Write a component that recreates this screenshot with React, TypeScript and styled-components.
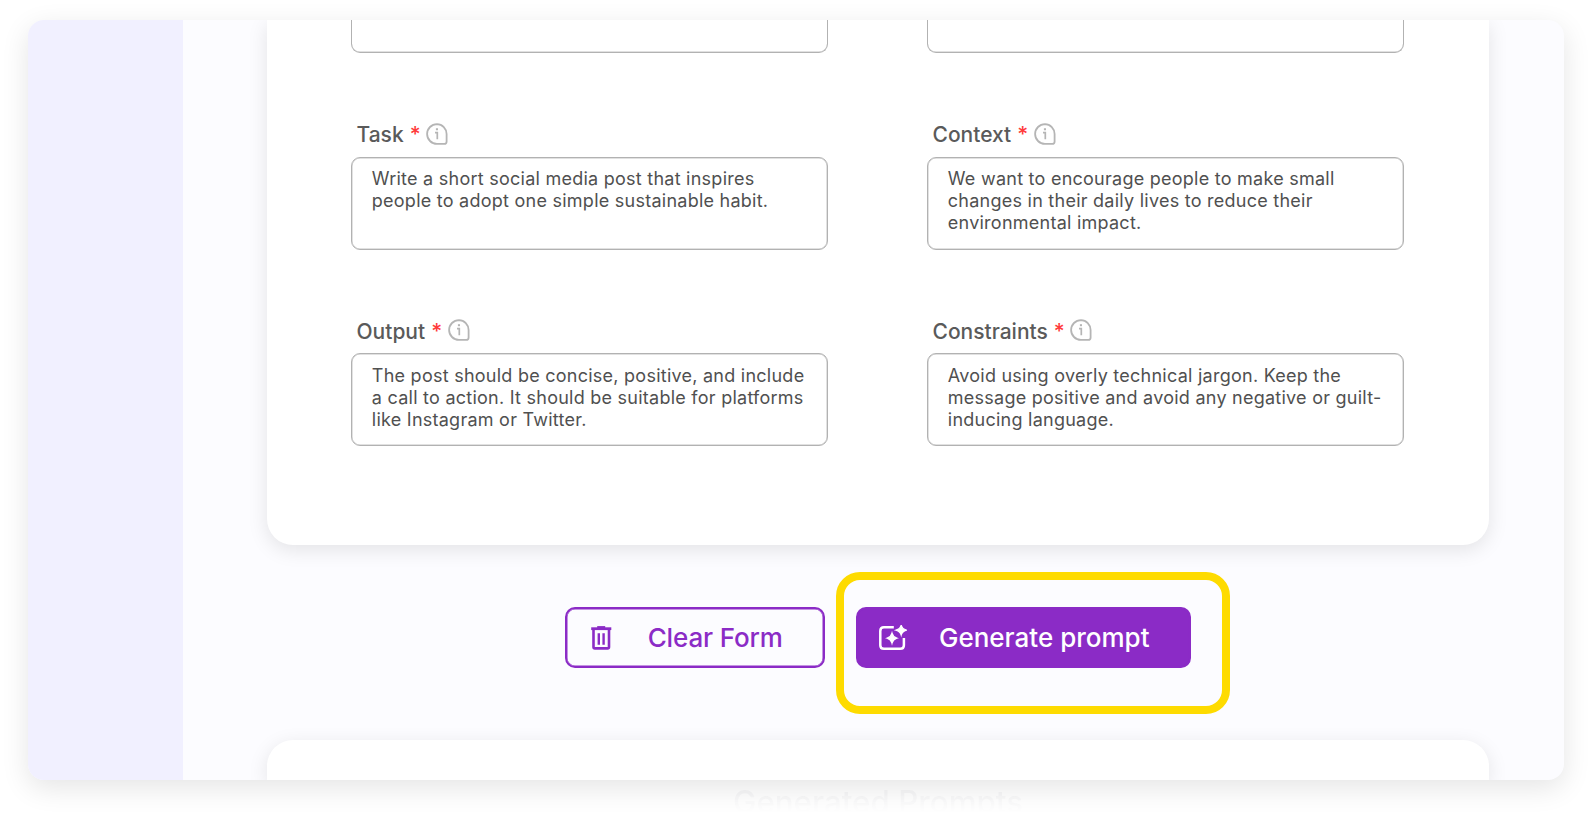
import React from 'react';
import styled, { createGlobalStyle } from 'styled-components';

const GlobalStyle = createGlobalStyle`
  *, *::before, *::after { box-sizing: border-box; }
  body {
    margin: 0;
    background: #fff;
    font-family: Inter, "Liberation Sans", sans-serif;
    overflow: hidden;
  }
`;

const Page = styled.div`
  position: relative;
  width: 1592px;
  height: 816px;
  padding: 20px 28px 36px;
  overflow: hidden;
`;

const Window = styled.div`
  display: flex;
  width: 1536px;
  height: 760px;
  border-radius: 16px;
  overflow: hidden;
  background: #fcfcff;
  box-shadow: 0 8px 28px rgba(0, 0, 0, 0.105);
`;

const Sidebar = styled.aside`
  flex: 0 0 155px;
  background: #f1f0ff;
`;

const Main = styled.main`
  flex: 1;
  display: flex;
  flex-direction: column;
  padding: 0 75px 0 84px;
`;

const Card = styled.section`
  flex: none;
  background: #fff;
  box-shadow: 0 5px 20px rgba(0, 0, 0, 0.1);
`;

const FormCard = styled(Card)`
  height: 525px;
  padding: 0 84px;
  border-radius: 0 0 26px 26px;
`;

const ResultCard = styled(Card)`
  height: 40px;
  border-radius: 26px 26px 0 0;
`;

const Grid = styled.div`
  display: grid;
  grid-template-columns: 476.6px 476.6px;
  column-gap: 99.4px;
`;

const TextBox = styled.div`
  height: 93px;
  padding: 10.5px 19.8px;
  border: 1px solid #b2b2b2;
  box-shadow: inset 0 0 0 0.5px #c4c4c4;
  border-radius: 9px;
  color: #505050;
  font-size: 18px;
  line-height: 22px;
  letter-spacing: 0.25px;
  white-space: pre;
`;

const ClippedBox = styled(TextBox)`
  height: 33px;
  border-top: 0;
  border-radius: 0 0 9px 9px;
  box-shadow: inset 0 -0.5px 0 0 #c4c4c4;
`;

const Field = styled.div`
  padding-top: 66px;
`;

const Label = styled.div`
  display: flex;
  align-items: center;
  height: 30px;
  margin: 0 0 7.7px 5.5px;
  padding-top: 1px;
  color: #5a5a5a;
  font-size: 21px;
  font-weight: 500;

  svg {
    margin-bottom: 2px;
  }
`;

const Required = styled.span`
  margin: 0 5.5px 0 6px;
  color: #ff3b3b;
`;

const Actions = styled.div`
  display: flex;
  flex: none;
  height: 195px;
  padding: 62px 0 0 298px;
  gap: 31px;
`;

const Button = styled.button<{ $primary?: boolean }>`
  display: flex;
  align-items: center;
  width: ${(p) => (p.$primary ? 335 : 260)}px;
  height: 61px;
  padding: 0 0 0 ${(p) => (p.$primary ? 21 : 23.5)}px;
  gap: ${(p) => (p.$primary ? 32 : 36.2)}px;
  border: 2px solid #8b2bc6;
  box-shadow: inset 0 0 0 0.5px #8b2bc6;
  border-radius: 10px;
  background: ${(p) => (p.$primary ? '#8b2bc6' : 'transparent')};
  color: ${(p) => (p.$primary ? '#fff' : '#8b2bc6')};
  font: 500 26px Inter, sans-serif;
  letter-spacing: ${(p) => (p.$primary ? 0 : -0.15)}px;
  white-space: nowrap;
`;

const Highlight = styled.div`
  position: absolute;
  left: 836px;
  top: 572px;
  width: 394px;
  height: 142px;
  border: 8px solid #fedb00;
  border-radius: 24px;
`;

const FadedTitle = styled.div`
  position: absolute;
  left: 733px;
  top: 788px;
  font-size: 31.3px;
  font-weight: 500;
  line-height: 28px;
  color: rgba(60, 60, 80, 0.04);
  white-space: nowrap;
  mask-image: linear-gradient(#000 20%, transparent 86%);
`;

const InfoIcon = () => (
  <svg width="22" height="22" viewBox="0 0 22 22" fill="none" stroke="#b5b5b5" strokeWidth="1.8">
    <path d="M11 1.1A9.8 9.8 0 0 0 11 20.9H18.2Q20.6 20.9 20.6 18.4V11A9.7 9.9 0 0 0 11 1.1Z" />
    <path d="M9 9.7H11.3V16.3" strokeWidth="1.7" />
    <path d="M9.9 6.2H12" strokeWidth="2" />
  </svg>
);

const TrashIcon = () => (
  <svg width="21" height="24" viewBox="0 0 21 24" fill="none" stroke="currentColor">
    <path d="M0.2 2.7H20.3" strokeWidth="2.8" />
    <path d="M6.2 1.2H14.2" strokeWidth="2.2" />
    <path d="M2.5 3V21Q2.5 22.4 3.9 22.4H16.6Q18 22.4 18 21V3" strokeWidth="2.6" />
    <path d="M7.8 7.2V18.8M12.6 7.2V18.8" strokeWidth="2.4" />
  </svg>
);

const SparkleIcon = () => (
  <svg width="28" height="26" viewBox="0 0 28 26" fill="none">
    <path
      d="M14.8 2.3H4.9Q1.3 2.3 1.3 5.9V20.2Q1.3 23.8 4.9 23.8H21.3Q24.9 23.8 24.9 20.2V13"
      stroke="currentColor"
      strokeWidth="2.5"
    />
    <path
      d="M22.2 0.2Q23.2 4 27.4 5.2Q23.2 6.4 22.2 10.2Q21.2 6.4 17 5.2Q21.2 4 22.2 0.2Z"
      fill="currentColor"
      stroke="currentColor"
      strokeWidth="1.2"
    />
    <path
      d="M13 8.2Q14 12 17.8 13.2Q14 14.4 13 18.2Q12 14.4 8.2 13.2Q12 12 13 8.2Z"
      fill="currentColor"
      stroke="currentColor"
      strokeWidth="1.3"
    />
  </svg>
);

const fields = [
  {
    label: 'Task',
    text: 'Write a short social media post that inspires\npeople to adopt one simple sustainable habit.',
  },
  {
    label: 'Context',
    text: 'We want to encourage people to make small\nchanges in their daily lives to reduce their\nenvironmental impact.',
  },
  {
    label: 'Output',
    text: 'The post should be concise, positive, and include\na call to action. It should be suitable for platforms\nlike Instagram or Twitter.',
  },
  {
    label: 'Constraints',
    text: 'Avoid using overly technical jargon. Keep the\nmessage positive and avoid any negative or guilt-\ninducing language.',
  },
];

export default function App() {
  return (
    <>
      <GlobalStyle />
      <Page>
        <Window>
          <Sidebar />
          <Main>
            <FormCard>
              <Grid>
                <ClippedBox />
                <ClippedBox />
                {fields.map((f) => (
                  <Field key={f.label}>
                    <Label>
                      {f.label}
                      <Required>*</Required>
                      <InfoIcon />
                    </Label>
                    <TextBox>{f.text}</TextBox>
                  </Field>
                ))}
              </Grid>
            </FormCard>
            <Actions>
              <Button>
                <TrashIcon />
                <span>Clear Form</span>
              </Button>
              <Button $primary>
                <SparkleIcon />
                <span>Generate prompt</span>
              </Button>
            </Actions>
            <ResultCard />
          </Main>
        </Window>
        <FadedTitle>Generated Prompts</FadedTitle>
        <Highlight />
      </Page>
    </>
  );
}
